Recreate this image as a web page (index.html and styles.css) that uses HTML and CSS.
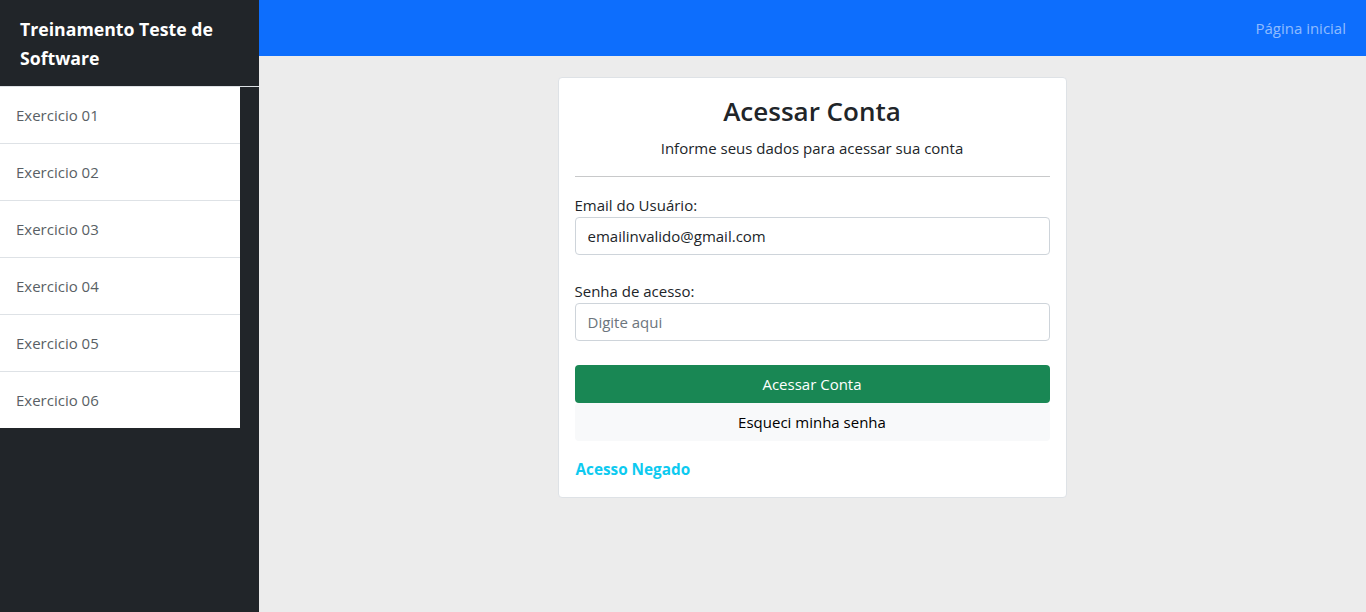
FILE: index.html
```html
<!DOCTYPE html>
<html lang="pt-br">
<head>
<meta charset="utf-8">
<title>Treinamento Teste de Software</title>
<link rel="stylesheet" href="styles.css">
</head>
<body>
<div class="wrapper">
  <aside class="sidebar">
    <div class="sidebar-heading">Treinamento Teste de Software</div>
    <div class="list-group">
      <a class="list-item" href="#">Exercicio 01</a>
      <a class="list-item" href="#">Exercicio 02</a>
      <a class="list-item" href="#">Exercicio 03</a>
      <a class="list-item" href="#">Exercicio 04</a>
      <a class="list-item" href="#">Exercicio 05</a>
      <a class="list-item" href="#">Exercicio 06</a>
    </div>
  </aside>
  <div class="page">
    <nav class="navbar">
      <a class="nav-link" href="#">Página inicial</a>
    </nav>
    <main class="content">
      <div class="card">
        <h3 class="card-title">Acessar Conta</h3>
        <p class="card-sub">Informe seus dados para acessar sua conta</p>
        <hr class="divider">
        <div class="field">
          <label class="label" for="email">Email do Usuário:</label>
          <input class="input" id="email" type="text" value="emailinvalido@gmail.com">
        </div>
        <div class="field">
          <label class="label" for="senha">Senha de acesso:</label>
          <input class="input" id="senha" type="password" placeholder="Digite aqui">
        </div>
        <div class="actions">
          <button class="btn btn-success" type="button">Acessar Conta</button>
          <button class="btn btn-light" type="button">Esqueci minha senha</button>
        </div>
        <a class="link-info" href="#">Acesso Negado</a>
      </div>
    </main>
  </div>
</div>
</body>
</html>
```
FILE: styles.css
```css
* { box-sizing: border-box; }
html, body { margin: 0; padding: 0; height: 100%; }
body {
  font-family: "Open Sans", "Noto Sans", sans-serif;
  font-size: 15px;
  line-height: 24px;
  color: #212529;
  background: #ececec;
}
.wrapper { display: flex; min-height: 100vh; }
.sidebar {
  width: 259px;
  flex: 0 0 259px;
  background: #212529;
}
.sidebar-heading {
  padding: 15px 20px 13px;
  font-size: 17.7px;
  font-weight: 700;
  line-height: 28.8px;
  color: #fff;
  height: 87px;
  border-bottom: 1px solid #dee2e6;
}
.list-group { width: 240px; display: flex; flex-direction: column; }
.list-item {
  display: block;
  padding: 16px;
  line-height: 24px;
  height: 57px;
  background: #fff;
  color: #595f65;
  text-decoration: none;
  border-bottom: 1px solid #dee2e6;
}
.list-item:last-child { border-bottom: 0; height: 56px; }
.page { flex: 1; display: flex; flex-direction: column; }
.navbar {
  height: 56px;
  background: #0d6efd;
  display: flex;
  align-items: center;
  justify-content: flex-end;
  padding: 0 20px;
}
.nav-link { color: rgba(255,255,255,.55); text-decoration: none; }
.content { display: flex; justify-content: center; padding-top: 21px; padding-right: 1px; }
.card {
  width: 509px;
  background: #fff;
  border: 1px solid #dee2e6;
  border-radius: 4px;
  padding: 16px;
  display: flex;
  flex-direction: column;
}
.card-title {
  margin: 0 0 8px;
  padding-top: 2px;
  font-size: 26px;
  font-weight: 600;
  line-height: 31.6px;
  text-align: center;
}
.card-sub { margin: 0 0 16px; text-align: center; }
.divider { margin: 0 0 16px; border: 0; border-top: 1px solid #c8c9ca; }
.field { display: flex; flex-direction: column; margin-bottom: 24px; }
.label { line-height: 24px; }
.input {
  height: 38px;
  padding: 6px 12px;
  font: inherit;
  color: #212529;
  border: 1px solid #ced4da;
  border-radius: 4px;
  background: #fff;
}
.input::placeholder { color: #6c757d; }
.actions { display: flex; flex-direction: column; margin-bottom: 16px; }
.btn {
  height: 38px;
  font: inherit;
  border: 0;
  border-radius: 4px;
  cursor: pointer;
}
.btn-success { background: #198754; color: #fff; }
.btn-light { background: #f8f9fa; color: #000; }
.link-info { align-self: flex-start; margin-left: 1px; font-size: 15.3px; color: #0dcaf0; font-weight: 700; text-decoration: none; line-height: 24px; }
```
